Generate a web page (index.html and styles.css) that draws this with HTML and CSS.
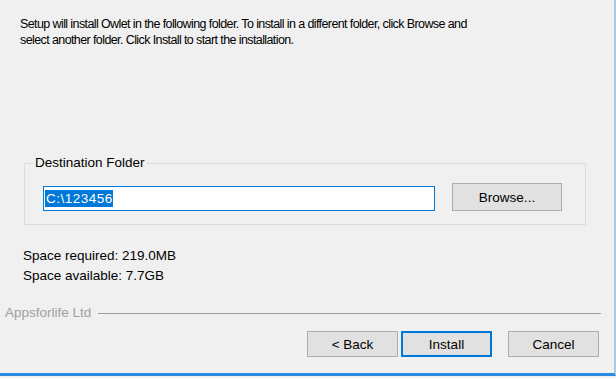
FILE: index.html
```html
<!DOCTYPE html>
<html>

<head>
    <title>Owlet Setup</title>
    <meta charset="utf-8">
    <link rel="stylesheet" href="styles.css">
</head>

<body>
    <div class="window">
        <p class="intro">Setup will install Owlet in the following folder. To install in a different folder, click Browse and
            select another folder. Click Install to start the installation.</p>

        <fieldset class="group">
            <legend>Destination Folder</legend>
            <div class="folder-row">
                <div class="path-box"><span class="selected">C:\123456</span></div>
                <button class="btn browse">Browse...</button>
            </div>
        </fieldset>

        <div class="space">
            <div>Space required: 219.0MB</div>
            <div>Space available: 7.7GB</div>
        </div>

        <div class="brand">
            <span class="brand-name">Appsforlife Ltd</span>
            <span class="brand-line"></span>
        </div>

        <div class="actions">
            <button class="btn">&lt; Back</button>
            <button class="btn default">Install</button>
            <button class="btn cancel">Cancel</button>
        </div>
    </div>
</body>

</html>
```

FILE: styles.css
```css
body,
html {
    margin: 0;
    height: 100%;
    overflow: hidden;
}

body {
    background-color: #f0f0f0;
    font-family: 'Liberation Sans', Arial, sans-serif;
    font-size: 13.5px;
    color: #000;
}

.window {
    box-sizing: border-box;
    width: 616px;
    height: 376px;
    border-right: 2px solid #a9c8e4;
    border-bottom: 3px solid #2b8be0;
    display: flex;
    flex-direction: column;
}

.intro {
    margin: 0;
    width: 472px;
    padding: 16px 0 0 20px;
    font-size: 12.5px;
    letter-spacing: -0.6px;
    line-height: 16px;
}

.group {
    margin: 107px 0 0 24px;
    width: 561px;
    height: 70px;
    box-sizing: border-box;
    border: 1px solid #dcdcdc;
    padding: 0 23px 0 8px;
}

.group legend {
    padding: 0 2px;
    line-height: 16px;
}

.folder-row {
    display: flex;
    align-items: flex-end;
    gap: 17px;
    margin: 12px 0 0 10px;
}

.path-box {
    box-sizing: border-box;
    width: 392px;
    height: 25px;
    background: #fff;
    border: 1px solid #0078d7;
    padding: 3px 1px 0 1px;
}

.selected {
    background: #0078d7;
    color: #fff;
    line-height: 17px;
    letter-spacing: 0.5px;
    padding-left: 1px;
    display: inline-block;
}

.btn {
    box-sizing: border-box;
    font-family: inherit;
    font-size: 13.5px;
    color: #000;
    background: #e1e1e1;
    border: 1px solid #adadad;
    height: 26px;
    padding: 0;
}

.browse {
    width: 110px;
    height: 28px;
}

.space {
    margin: 21px 0 0 23px;
    line-height: 20px;
}

.brand {
    display: flex;
    align-items: center;
    margin: 18px 13px 0 5px;
    height: 16px;
}

.brand-name {
    color: #a0a0a0;
}

.brand-line {
    flex: 1;
    border-top: 1px solid #a0a0a0;
    margin: 3px 0 0 7px;
}

.actions {
    display: flex;
    gap: 3px;
    margin: 11px 0 0 307px;
}

.actions .btn {
    width: 91px;
}

.actions .default {
    border: 2px solid #0078d7;
}

.actions .cancel {
    margin-left: 13px;
}
```
